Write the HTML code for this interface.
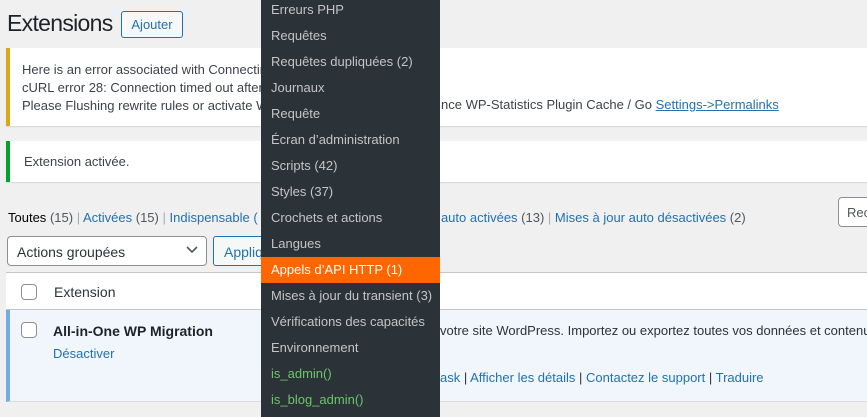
<!DOCTYPE html>
<html><head><meta charset="utf-8"><style>
*{margin:0;padding:0;box-sizing:border-box}
body{width:867px;height:409px;overflow:hidden;background:#f0f0f1;font-family:"Liberation Sans",sans-serif;font-size:13px;color:#3c434a;position:relative}
.a{position:absolute;white-space:nowrap}
a,.lk{color:#2271b1;text-decoration:none}
.menu{position:absolute;left:261px;top:-3px;width:179px;height:420px;background:#2c3338}
.menu div{height:26px;line-height:26px;padding-left:10px;color:#c3c4c7;font-size:13px;white-space:nowrap}
.menu .hi{background:#ff6600;color:#fff}
.menu .g{color:#6cc46c}
.cb{position:absolute;width:16px;height:16px;border:1px solid #8c8f94;border-radius:4px;background:#fff}
</style></head><body>
<div class="a" style="left:7px;top:10px;font-size:23px;color:#1d2327;letter-spacing:-0.7px">Extensions</div>
<div class="a" style="left:121px;top:11px;width:62px;height:27px;border:1px solid #2271b1;border-radius:3px;color:#2271b1;text-align:center;line-height:25px;background:#f6f7f7">Ajouter</div>

<div class="a" style="left:6px;top:48px;width:870px;height:78px;background:#fff;border-left:4px solid #dba617;box-shadow:0 1px 1px rgba(0,0,0,.1)"></div>
<div class="a" style="left:22px;top:61px;line-height:18px;color:#3c434a">Here is an error associated with Connecting<br>cURL error 28: Connection timed out after<br>Please Flushing rewrite rules or activate W</div>
<div class="a" style="left:441px;top:97px">nce WP-Statistics Plugin Cache / Go <span style="color:#2271b1;text-decoration:underline">Settings-&gt;Permalinks</span></div>

<div class="a" style="left:6px;top:141px;width:870px;height:41px;background:#fff;border-left:4px solid #00a32a;box-shadow:0 1px 1px rgba(0,0,0,.1)"></div>
<div class="a" style="left:24px;top:154px">Extension activée.</div>

<div class="a" style="left:8px;top:210px"><span style="color:#000">Toutes</span> <span style="color:#50575e">(15)</span> <span style="color:#a7aaad">|</span> <span class="lk">Activées <span style="color:#50575e">(15)</span></span> <span style="color:#a7aaad">|</span> <span class="lk">Indispensable (</span></div>
<div class="a" style="left:433px;top:210px"><span class="lk">r auto activées <span style="color:#50575e">(13)</span></span> <span style="color:#a7aaad">|</span> <span class="lk">Mises à jour auto désactivées <span style="color:#50575e">(2)</span></span></div>
<div class="a" style="left:838px;top:197px;width:40px;height:30px;border:1px solid #8c8f94;border-radius:4px;background:#fff;padding:7px 8px;color:#50575e">Rec</div>

<div class="a" style="left:7px;top:236px;width:200px;height:30px;border:1px solid #8c8f94;border-radius:4px;background:#fff;padding:7px 9px;color:#2c3338;font-size:14px">Actions groupées</div>
<svg class="a" style="left:185px;top:245px" width="14" height="10"><path d="M2 2l5 5 5-5" stroke="#50575e" stroke-width="1.6" fill="none"/></svg>
<div class="a" style="left:213px;top:236px;width:60px;height:30px;border:1px solid #2271b1;border-radius:3px;background:#f6f7f7;padding:7px 10px;color:#2271b1;font-size:14px">Appliquer</div>

<div class="a" style="left:6px;top:272px;width:870px;height:38px;background:#fff;border-top:1px solid #c3c4c7;border-bottom:1px solid #c3c4c7"></div>
<div class="cb" style="left:21px;top:284px"></div>
<div class="a" style="left:54px;top:284px;font-size:14px;color:#2c3338">Extension</div>
<div class="a" style="left:6px;top:310px;width:870px;height:92px;background:#f0f6fc;border-left:4px solid #72aee6;border-bottom:1px solid #dcdcde"></div>
<div class="cb" style="left:21px;top:322px"></div>
<div class="a" style="left:53px;top:323px;font-size:14px;font-weight:bold;color:#1d2327">All-in-One WP Migration</div>
<div class="a" style="left:53px;top:346px;color:#2271b1">Désactiver</div>
<div class="a" style="left:440px;top:323px;color:#2c3338">votre site WordPress. Importez ou exportez toutes vos données et contenu</div>
<div class="a" style="left:440px;top:370px;color:#2c3338"><span class="lk">ask</span> | <span class="lk">Afficher les détails</span> | <span class="lk">Contactez le support</span> | <span class="lk">Traduire</span></div>

<div class="menu">
<div>Erreurs PHP</div><div>Requêtes</div><div>Requêtes dupliquées (2)</div><div>Journaux</div><div>Requête</div><div>Écran d’administration</div><div>Scripts (42)</div><div>Styles (37)</div><div>Crochets et actions</div><div>Langues</div><div class="hi">Appels d’API HTTP (1)</div><div>Mises à jour du transient (3)</div><div>Vérifications des capacités</div><div>Environnement</div><div class="g">is_admin()</div><div class="g">is_blog_admin()</div>
</div>
</body></html>
